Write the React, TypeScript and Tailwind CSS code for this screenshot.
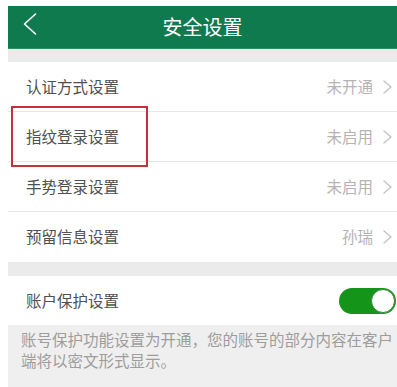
const rows = [
  { label: '认证方式设置', value: '未开通' },
  { label: '指纹登录设置', value: '未启用' },
  { label: '手势登录设置', value: '未启用' },
  { label: '预留信息设置', value: '孙瑞' },
]

function Chevron() {
  return (
    <svg width="11" height="16" viewBox="0 0 11 16" fill="none">
      <path d="M2 2 L9 8 L2 14" stroke="#c2c2c2" strokeWidth="1.3" strokeLinecap="round" strokeLinejoin="round" />
    </svg>
  )
}

function Row({ label, value, last }: { label: string; value: string; last?: boolean }) {
  return (
    <div className={`flex h-[50px] items-center justify-between bg-white pl-[18px] pr-[4px] ${last ? '' : 'border-b border-[#e6e6e6]'}`}>
      <span className="text-[15.5px] text-[#505050]">{label}</span>
      <div className="flex items-center gap-[9px]">
        <span className="text-[15.5px] text-[#b4b4b4]">{value}</span>
        <Chevron />
      </div>
    </div>
  )
}

export default function App() {
  return (
    <div className="h-[387px] w-[397px] overflow-hidden bg-white pl-[8px] pt-[6px] font-['Noto_Sans_CJK_SC','Noto_Sans',sans-serif]">
      {/* Header */}
      <div className="relative flex h-[43px] items-center justify-center border-b border-[#2f8f63] bg-[#107a4f]">
        <svg className="absolute left-[14px] top-[6px]" width="16" height="24" viewBox="0 0 16 24" fill="none">
          <path d="M13.5 2 L2.5 12 L13.5 22" stroke="white" strokeWidth="1.6" strokeLinecap="round" strokeLinejoin="round" />
        </svg>
        <span className="text-[20px] text-white">安全设置</span>
      </div>

      <div className="h-[13px] bg-[#ebebeb]" />

      {/* Settings list */}
      <div className="relative">
        {rows.map((r, i) => (
          <Row key={r.label} label={r.label} value={r.value} last={i === rows.length - 1} />
        ))}
        <div className="absolute left-[3px] top-[44px] h-[61px] w-[137px] border-2 border-[#c4303c]" />
      </div>

      <div className="h-[14px] bg-[#ebebeb]" />

      {/* Account protection */}
      <div className="flex h-[49px] items-center justify-between bg-white pl-[18px]">
        <span className="text-[15.5px] text-[#505050]">账户保护设置</span>
        <div className="mr-[1px] flex h-[26px] w-[57px] items-center justify-end rounded-full bg-[#14951a] p-[1px]">
          <div className="h-[24px] w-[24px] rounded-full border border-[#3f7f3f] bg-white" />
        </div>
      </div>

      <div className="h-full bg-[#efefef] pl-[13px] pt-[4px] text-[15.5px] leading-[21px] text-[#9d9d9d]">
        账号保护功能设置为开通，您的账号的部分内容在客户端将以密文形式显示。
      </div>
    </div>
  )
}
